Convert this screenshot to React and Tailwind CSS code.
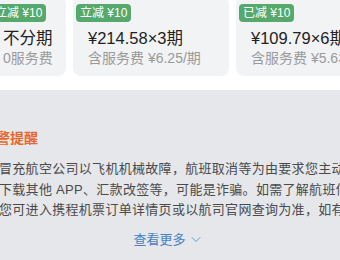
import React from "react";

function Badge({ children }) {
  return (
    <div className="h-[18px] px-[4px] rounded-[4px] bg-[#55a96d] text-white text-[12px] leading-[18px] whitespace-nowrap inline-flex items-center">
      {children}
    </div>
  );
}

function Card({ w, badge, price, sub }) {
  return (
    <div className={`${w} shrink-0 h-[80px] rounded-[8px] bg-[#f2f3f5] pt-[8px] pl-[3px] flex flex-col`}>
      <div className="flex">
        <Badge>{badge}</Badge>
      </div>
      <div className="pl-[12px] mt-[6px] text-[16.5px] leading-[20px] text-[#222] whitespace-nowrap">{price}</div>
      <div className="pl-[12px] mt-[1px] text-[14px] leading-[18px] text-[#9a9a9a] whitespace-nowrap">{sub}</div>
    </div>
  );
}

export default function App() {
  return (
    <div className="w-[340px] h-[260px] overflow-hidden bg-white font-['Liberation_Sans','Noto_Sans_CJK_SC',sans-serif]">
      <div className="h-[90px] bg-white overflow-hidden">
        <div className="flex gap-[7px] ml-[-12px] mt-[-4px]">
          <Card w="w-[78px]" badge="立减 ¥10" price="不分期" sub="0服务费" />
          <Card w="w-[156px]" badge="立减 ¥10" price="¥214.58×3期" sub="含服务费 ¥6.25/期" />
          <Card w="w-[156px]" badge="已减 ¥10" price="¥109.79×6期" sub="含服务费 ¥5.63/期" />
        </div>
      </div>
      <div className="h-[170px] bg-[#e5e7ea] pt-[38px] overflow-hidden">
        <div className="ml-[-18px] text-[14px] leading-[20px] font-bold text-[#e8682c] whitespace-nowrap">预警提醒</div>
        <div className="mt-[11px] ml-[-1px] text-[13px] leading-[20.5px] tracking-[0.3px] text-[#4a4a4a] whitespace-nowrap">
          <div>冒充航空公司以飞机机械故障，航班取消等为由要求您主动</div>
          <div>下载其他 APP、汇款改签等，可能是诈骗。如需了解航班信</div>
          <div>您可进入携程机票订单详情页或以航司官网查询为准，如有</div>
        </div>
        <div className="mt-[9px] flex justify-center items-center gap-[5px] pr-[6px] text-[13px] leading-[20px] text-[#4b7fc4]">
          <span>查看更多</span>
          <svg width="10" height="7" viewBox="0 0 10 7" fill="none">
            <polyline points="1,1.5 5,5.5 9,1.5" stroke="#6f97cf" strokeWidth="1" strokeLinecap="round" strokeLinejoin="round" />
          </svg>
        </div>
      </div>
    </div>
  );
}
